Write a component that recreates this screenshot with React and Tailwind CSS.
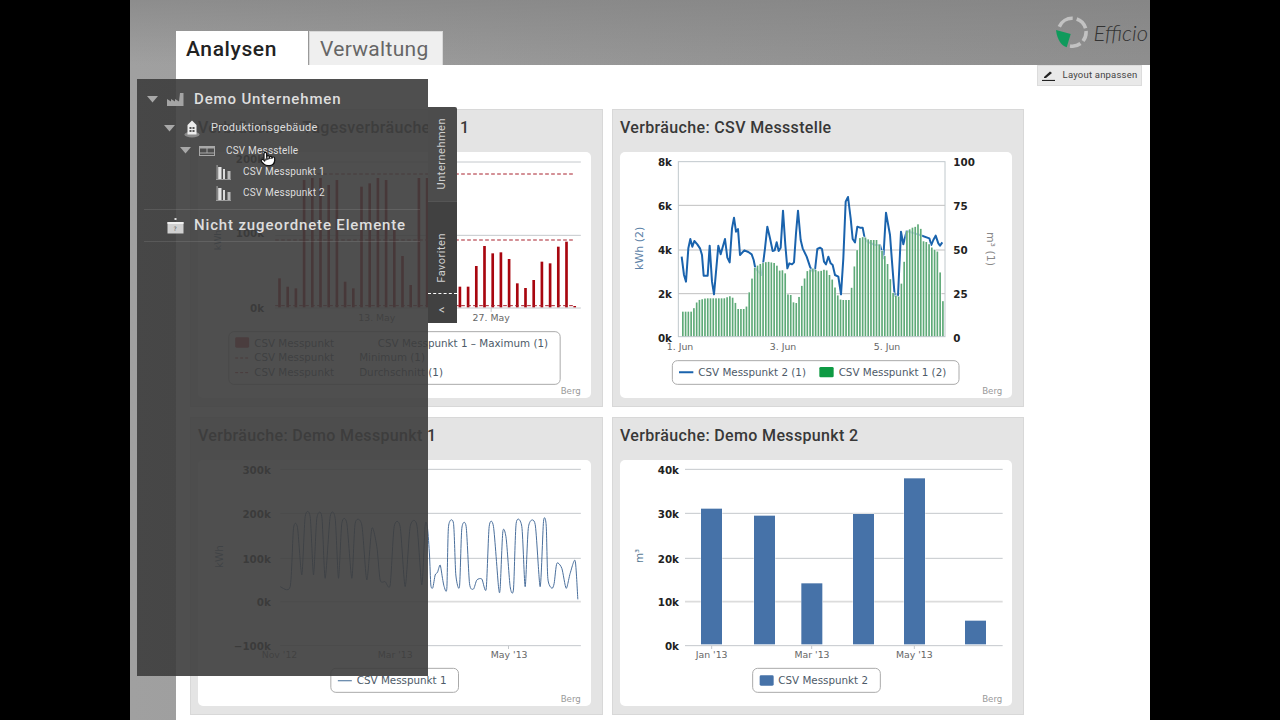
import React from "react";
import { Pointer } from "lucide-react";

const DJ = { fontFamily: "'DejaVu Sans', sans-serif" };

function interp(keys, x) {
  for (let i = 1; i < keys.length; i++) {
    if (x <= keys[i][0]) {
      const [a, b] = keys[i - 1];
      const [c, d] = keys[i];
      return b + ((d - b) * (x - a)) / (c - a);
    }
  }
  return keys[keys.length - 1][1];
}
const pts = (a) => a.map((p) => p.join(",")).join(" ");
function smooth(a) {
  let d = `M${a[0][0]} ${a[0][1]}`;
  for (let i = 0; i < a.length - 1; i++) {
    const p0 = a[Math.max(i - 1, 0)];
    const p1 = a[i];
    const p2 = a[i + 1];
    const p3 = a[Math.min(i + 2, a.length - 1)];
    const k = 0.12;
    d += ` C${p1[0] + (p2[0] - p0[0]) * k} ${p1[1] + (p2[1] - p0[1]) * k} ${p2[0] - (p3[0] - p1[0]) * k} ${p2[1] - (p3[1] - p1[1]) * k} ${p2[0]} ${p2[1]}`;
  }
  return d;
}

function Tick({ x, y, children, size = 31 }) {
  return (
    <text x={x} y={y} textAnchor="end" fontSize={size} fontWeight="700" fill="#222" style={DJ}>
      {children}
    </text>
  );
}
function XLabel({ x, y, children }) {
  return (
    <text x={x} y={y} textAnchor="middle" fontSize="28" fill="#666" style={DJ}>
      {children}
    </text>
  );
}
function Berg({ x, y }) {
  return (
    <text x={x} y={y} textAnchor="end" fontSize="26" fill="#999" style={DJ}>
      Berg
    </text>
  );
}
function LegendText({ x, y, children }) {
  return (
    <text x={x} y={y} fontSize="31" fill="#4d5a68" style={DJ}>
      {children}
    </text>
  );
}

function Chart1() {
  const tops = [175, 200, 205, -120, -126, -126, -105, -120, 185, 205, -100, -110, -126, -120, 30, 108, 195, -126, -126, -110, -60, 200, 200, 200, 138, 78, 100, 97, 117, 190, 204, 180, 125, 130, 80, 65, 258];
  return (
    <svg viewBox="25 -204 1176 738" className="absolute inset-0 w-full h-full">
      {[-174, 46, 264].map((y) => (
        <line key={y} x1="255" x2="1172" y1={y} y2={y} stroke="#c4c8cc" strokeWidth="3" />
      ))}
      {tops.map((t, i) => {
        const x = 264 + i * 24.6;
        return <rect key={i} x={x} y={t} width="8" height={262 - t} fill="#a8060f" />;
      })}
      {[-138, 60, 257].map((y) => (
        <line key={y} x1="255" x2="1150" y1={y} y2={y} stroke="#a8202c" strokeWidth="3" strokeDasharray="11 7" />
      ))}
      <line x1="903" x2="903" y1="264" y2="276" stroke="#c4c8cc" strokeWidth="3" />
      <Tick x={222} y={-170}>200k</Tick>
      <Tick x={222} y={52}>100k</Tick>
      <Tick x={222} y={276}>0k</Tick>
      <text x="92" y="60" transform="rotate(-90 92 60)" textAnchor="middle" fontSize="28" fill="#5a7a95" style={DJ}>kWh</text>
      <XLabel x={560} y={302}>13. May</XLabel>
      <XLabel x={903} y={302}>27. May</XLabel>
      <rect x="116" y="335" width="994" height="158" rx="15" fill="#fff" stroke="#aaa" strokeWidth="3" />
      <rect x="135" y="352" width="42" height="31" rx="4" fill="#c03a42" />
      <LegendText x={192} y={380}>CSV Messpunkt</LegendText>
      <line x1="135" x2="177" y1="414" y2="414" stroke="#b5222b" strokeWidth="3" strokeDasharray="9 6" />
      <LegendText x={192} y={424}>CSV Messpunkt</LegendText>
      <line x1="135" x2="177" y1="458" y2="458" stroke="#b5222b" strokeWidth="3" strokeDasharray="9 6" />
      <LegendText x={192} y={468}>CSV Messpunkt</LegendText>
      <LegendText x={563} y={380}>CSV Messpunkt 1 – Maximum (1)</LegendText>
      <LegendText x={507} y={424}>Minimum (1)</LegendText>
      <LegendText x={507} y={468}>Durchschnitt (1)</LegendText>
      <Berg x={1172} y={522} />
    </svg>
  );
}

const line2 = [[215,455],[222,510],[228,530],[235,430],[241,402],[247,425],[253,408],[262,418],[270,430],[276,450],[281,512],[293,512],[299,422],[306,530],[312,568],[325,422],[332,448],[345,402],[352,458],[359,472],[366,370],[372,338],[378,380],[384,372],[390,450],[403,436],[415,441],[425,448],[431,465],[436,490],[455,510],[465,430],[472,365],[480,400],[488,438],[494,436],[500,412],[506,438],[512,428],[519,317],[526,420],[532,490],[538,475],[546,478],[552,472],[558,385],[564,317],[572,405],[578,430],[590,455],[600,485],[608,500],[615,495],[622,432],[630,428],[636,432],[642,470],[648,478],[655,455],[662,475],[668,480],[675,510],[685,515],[693,568],[700,460],[707,290],[714,276],[722,340],[728,402],[735,412],[742,365],[750,368],[758,368],[764,400],[772,410],[795,420],[810,420],[820,460],[828,323],[840,390],[846,470],[854,572],[864,572],[873,380],[880,418],[890,378],[930,390],[958,400],[964,420],[970,405],[977,392],[985,415],[990,422],[997,412]];
const barKeys = [[216,620],[245,620],[255,595],[265,585],[285,580],[340,580],[362,572],[372,590],[382,612],[405,612],[412,585],[418,542],[432,488],[445,478],[470,470],[495,475],[505,497],[522,495],[530,568],[540,570],[548,592],[560,595],[572,545],[590,497],[605,490],[625,500],[645,492],[665,525],[680,570],[690,585],[718,585],[728,500],[735,458],[745,400],[760,395],[775,405],[800,405],[810,430],[828,465],[838,520],[848,570],[865,575],[877,505],[888,378],[905,368],[915,365],[927,352],[935,408],[950,412],[965,430],[980,440],[987,490],[993,572],[999,603]];

function Chart2() {
  const bars = [];
  for (let i = 0; i < 95; i++) bars.push(216 + i * 8.3);
  return (
    <svg viewBox="30 141 1176 738" className="absolute inset-0 w-full h-full">
      {[301, 435, 566].map((y) => (
        <line key={y} x1="205" x2="1005" y1={y} y2={y} stroke="#c0c0c0" strokeWidth="3" />
      ))}
      <polyline points={pts(line2)} fill="none" stroke="#1a63ad" strokeWidth="6" strokeLinejoin="round" />
      {bars.map((x) => {
        const t = interp(barKeys, x);
        return (
          <g key={x}>
            <rect x={x - 1.5} y={t - 2} width="8.3" height={695 - t + 2} fill="#fff" opacity="0.85" />
            <rect x={x} y={t} width="5" height={695 - t} fill="#5eaa78" />
          </g>
        );
      })}
      <rect x="205" y="170" width="800" height="525" fill="none" stroke="#c0c8cc" strokeWidth="3" />
      <Tick x={186} y={183}>8k</Tick>
      <Tick x={186} y={314}>6k</Tick>
      <Tick x={186} y={447}>4k</Tick>
      <Tick x={186} y={579}>2k</Tick>
      <Tick x={186} y={710}>0k</Tick>
      {[["100", 183], ["75", 314], ["50", 447], ["25", 579], ["0", 710]].map(([t, y]) => (
        <text key={t} x="1030" y={y} fontSize="31" fontWeight="700" fill="#222" style={DJ}>{t}</text>
      ))}
      <text x="100" y="430" transform="rotate(-90 100 430)" textAnchor="middle" fontSize="33" fill="#5d83a8" style={DJ}>kWh (2)</text>
      <text x="1130" y="432" transform="rotate(90 1130 432)" textAnchor="middle" fontSize="33" fill="#888" style={DJ}>m³ (1)</text>
      <XLabel x={210} y={735}>1. Jun</XLabel>
      <XLabel x={519} y={735}>3. Jun</XLabel>
      <XLabel x={831} y={735}>5. Jun</XLabel>
      <rect x="187" y="767" width="860" height="71" rx="15" fill="#fff" stroke="#aaa" strokeWidth="3" />
      <line x1="207" x2="250" y1="802" y2="802" stroke="#1a63ad" strokeWidth="6" />
      <LegendText x={265} y={814}>CSV Messpunkt 2 (1)</LegendText>
      <rect x="628" y="786" width="43" height="31" rx="4" fill="#0e9a43" />
      <LegendText x={686} y={814}>CSV Messpunkt 1 (2)</LegendText>
      <Berg x={1177} y={866} />
    </svg>
  );
}

const line3 = [[270,515],[300,515],[310,340],[322,338],[335,480],[345,305],[360,305],[370,480],[380,310],[395,305],[405,490],[420,305],[435,310],[445,490],[455,325],[470,325],[485,490],[495,325],[515,330],[530,495],[545,340],[560,395],[570,495],[585,500],[600,510],[612,335],[630,335],[645,515],[660,335],[680,330],[695,510],[705,330],[712,340],[718,420],[722,510],[728,518],[735,480],[742,472],[750,450],[757,490],[762,515],[770,520],[775,335],[790,325],[797,480],[808,515],[815,340],[828,335],[838,505],[850,522],[860,495],[875,492],[888,522],[897,335],[910,335],[925,515],[930,520],[938,350],[948,370],[960,515],[970,522],[978,325],[995,335],[1005,515],[1015,335],[1035,328],[1050,515],[1060,320],[1068,330],[1073,490],[1085,520],[1092,505],[1100,445],[1115,460],[1128,520],[1140,475],[1155,437],[1163,553]];

function Chart3() {
  return (
    <svg viewBox="25 135 1176 738" className="absolute inset-0 w-full h-full">
      {[163, 295, 430, 692].map((y) => (
        <line key={y} x1="270" x2="1172" y1={y} y2={y} stroke="#c4c8cc" strokeWidth="3" />
      ))}
      <line x1="270" x2="1172" y1="560" y2="560" stroke="#dcdcdc" strokeWidth="5" />
      <path d={smooth(line3)} fill="none" stroke="#4a6f9c" strokeWidth="3" strokeLinejoin="round" />
      <line x1="955" x2="955" y1="692" y2="702" stroke="#c4c8cc" strokeWidth="3" />
      <Tick x={242} y={176}>300k</Tick>
      <Tick x={242} y={308}>200k</Tick>
      <Tick x={242} y={443}>100k</Tick>
      <Tick x={242} y={573}>0k</Tick>
      <Tick x={242} y={705}>−100k</Tick>
      <text x="98" y="425" transform="rotate(-90 98 425)" textAnchor="middle" fontSize="31" fill="#5a7a95" style={DJ}>kWh</text>
      <XLabel x={268} y={728}>Nov '12</XLabel>
      <XLabel x={615} y={728}>Mar '13</XLabel>
      <XLabel x={957} y={728}>May '13</XLabel>
      <rect x="422" y="760" width="383" height="72" rx="15" fill="#fff" stroke="#aaa" strokeWidth="3" />
      <line x1="443" x2="485" y1="797" y2="797" stroke="#6f8fb0" strokeWidth="4" />
      <LegendText x={500} y={808}>CSV Messpunkt 1</LegendText>
      <Berg x={1172} y={860} />
    </svg>
  );
}

function Chart4() {
  const bars = [[273,281],[432,302],[574,505],[729,297],[882,190],[1065,617]];
  return (
    <svg viewBox="30 135 1176 738" className="absolute inset-0 w-full h-full">
      {[163, 295, 430, 692].map((y) => (
        <line key={y} x1="225" x2="1178" y1={y} y2={y} stroke="#c4c8cc" strokeWidth="3" />
      ))}
      <line x1="225" x2="1178" y1="560" y2="560" stroke="#dcdcdc" strokeWidth="5" />
      {bars.map(([x, t]) => (
        <rect key={x} x={x} y={t} width="63" height={688 - t} fill="#4672a8" stroke="#fff" strokeWidth="2" paintOrder="stroke" />
      ))}
      {[305, 605, 913].map((x) => (
        <line key={x} x1={x} x2={x} y1="692" y2="702" stroke="#c4c8cc" strokeWidth="3" />
      ))}
      <Tick x={207} y={176}>40k</Tick>
      <Tick x={207} y={308}>30k</Tick>
      <Tick x={207} y={443}>20k</Tick>
      <Tick x={207} y={573}>10k</Tick>
      <Tick x={207} y={705}>0k</Tick>
      <text x="100" y="423" transform="rotate(-90 100 423)" textAnchor="middle" fontSize="31" fill="#5a7a95" style={DJ}>m³</text>
      <XLabel x={305} y={730}>Jan '13</XLabel>
      <XLabel x={606} y={730}>Mar '13</XLabel>
      <XLabel x={913} y={730}>May '13</XLabel>
      <rect x="428" y="760" width="383" height="72" rx="15" fill="#fff" stroke="#aaa" strokeWidth="3" />
      <rect x="449" y="781" width="42" height="31" rx="4" fill="#4672a8" />
      <LegendText x={505} y={808}>CSV Messpunkt 2</LegendText>
      <Berg x={1177} y={860} />
    </svg>
  );
}

function Card({ title, children }) {
  return (
    <div className="h-[298px] bg-[#e4e4e4] border border-[#d8d8d8] pl-[7px] pr-[11px] pb-[8px] flex flex-col">
      <div className="h-[42px] shrink-0 pb-[6px] flex items-center text-[16px] font-medium tracking-[0.35px] text-[#383838] whitespace-nowrap">
        {title}
      </div>
      <div className="relative flex-1 bg-white rounded-[5px] overflow-hidden">{children}</div>
    </div>
  );
}

const Arrow = () => (
  <svg width="11" height="7" viewBox="0 0 11 7" className="shrink-0">
    <path d="M0 0H11L5.5 6.5Z" fill="#a8a8a8" />
  </svg>
);
const Factory = () => (
  <svg width="17" height="13" viewBox="0 0 17 13">
    <path d="M0 13V6L4 8.5V6L8 8.5V6L12 8.5L13 0H16.5V13Z" fill="#a4a4a4" />
  </svg>
);
const House = () => (
  <svg width="16" height="18" viewBox="0 0 16 18">
    <ellipse cx="8" cy="14.5" rx="7.5" ry="3" fill="#8a8a8a" />
    <path d="M8 0.5L12.5 5V14.5H3.5V5Z" fill="#ededed" />
    <rect x="5.5" y="7" width="2" height="2" fill="#555" />
    <rect x="8.5" y="7" width="2" height="2" fill="#555" />
    <rect x="5.5" y="10" width="2" height="2" fill="#555" />
    <rect x="8.5" y="10" width="2" height="2" fill="#555" />
  </svg>
);
const Machine = () => (
  <svg width="16" height="10" viewBox="0 0 16 10">
    <rect x="0.5" y="0.5" width="15" height="9" fill="none" stroke="#a8a8a8" />
    <rect x="1" y="1" width="14" height="1.5" fill="#a8a8a8" />
    <rect x="7.5" y="1" width="1" height="6" fill="#a8a8a8" />
    <rect x="1" y="6.5" width="14" height="1" fill="#a8a8a8" />
  </svg>
);
const Bars = () => (
  <svg width="15" height="16" viewBox="0 0 15 16">
    <rect x="0.5" y="1" width="1.2" height="14" fill="#9c9c9c" />
    <rect x="2.2" y="3" width="3.3" height="12" fill="#e4e4e4" />
    <rect x="7" y="5" width="2" height="10" fill="#dcdcdc" />
    <rect x="11.5" y="7" width="3" height="8" fill="#bcbcbc" />
    <rect x="0" y="15" width="15" height="1" fill="#9c9c9c" />
  </svg>
);
const Box = () => (
  <svg width="17" height="16" viewBox="0 0 17 16">
    <rect x="7.5" y="0" width="2" height="2" fill="#ddd" />
    <rect x="0.5" y="4" width="16" height="11.5" fill="#d0d0d0" />
    <rect x="0.5" y="4" width="16" height="2" fill="#f0f0f0" />
    <text x="8.5" y="13" textAnchor="middle" fontSize="6" fill="#555" style={DJ}>?</text>
  </svg>
);

function Row({ className, children }) {
  return <div className={"flex items-center " + className}>{children}</div>;
}

function Sidebar() {
  return (
    <div className="absolute left-[7px] top-[79px] w-[291px] h-[597px] bg-[rgba(62,62,62,0.91)]">
      <Row className="h-[38px] pt-[3px] pl-[10px] text-[15px] font-medium tracking-[0.85px] text-[#dedede]">
        <Arrow />
        <span className="ml-[9px] w-[18px] flex"><Factory /></span>
        <span className="ml-[9px]">Demo Unternehmen</span>
      </Row>
      <Row className="h-[23px] pl-[27px] text-[11px] tracking-[0.3px] text-[#dedede]">
        <Arrow />
        <span className="ml-[9px] w-[16px] flex"><House /></span>
        <span className="ml-[11px]">Produktionsgebäude</span>
      </Row>
      <Row className="h-[21px] pl-[43px] text-[10px] tracking-[0.2px] text-[#dedede]">
        <Arrow />
        <span className="ml-[8px] w-[16px] flex"><Machine /></span>
        <span className="ml-[11px]">CSV Messstelle</span>
      </Row>
      <Row className="h-[21px] pl-[79px] text-[10px] tracking-[0.2px] text-[#dedede]">
        <Bars />
        <span className="ml-[12px]">CSV Messpunkt 1</span>
      </Row>
      <Row className="h-[21px] pl-[79px] text-[10px] tracking-[0.2px] text-[#dedede]">
        <Bars />
        <span className="ml-[12px]">CSV Messpunkt 2</span>
      </Row>
      <div className="mt-[6px] mx-[7px] h-[33px] border-y border-white/10 flex items-center pl-[23px] text-[15px] font-medium tracking-[0.85px] text-[#dedede] w-[276px] whitespace-nowrap">
        <Box />
        <span className="ml-[10px]">Nicht zugeordnete Elemente</span>
      </div>
      <div className="absolute left-[291px] top-[28px] w-[29px] flex flex-col text-[#cfcfcf] text-[11px] tracking-[0.5px]">
        <div className="h-[94px] bg-[#4c4c4c] flex items-center justify-center rounded-tr-[2px]">
          <span className="[writing-mode:vertical-rl] rotate-180">Unternehmen</span>
        </div>
        <div className="h-[92px] pb-[10px] bg-[#414141] flex items-end justify-center border-t border-[#555]">
          <span className="[writing-mode:vertical-rl] rotate-180">Favoriten</span>
        </div>
        <div className="h-[30px] pt-[2px] pr-[1px] bg-[#414141] border-t border-dashed border-white flex items-center justify-center text-[12px]">
          &lt;
        </div>
      </div>
      <Pointer className="absolute left-[123px] top-[72px]" size={16} fill="#fff" stroke="#111" strokeWidth={1.8} />
    </div>
  );
}

export default function App() {
  return (
    <div className="w-[1280px] h-[720px] bg-black flex justify-center overflow-hidden" style={{ fontFamily: "Roboto, 'Liberation Sans', sans-serif" }}>
      <div className="relative w-[1020px] h-[720px] bg-gradient-to-r from-[#a0a0a0] via-[#969696] to-[#8f8f8f] overflow-hidden">
        <header className="h-[65px] pt-[31px] pl-[46px] flex relative bg-gradient-to-b from-[#808080]/60 to-transparent">
          <div className="w-[132px] h-[34px] pl-[10px] pt-[3px] bg-white flex items-center text-[21px] font-medium tracking-[0.6px] text-[#222]">
            Analysen
          </div>
          <div className="ml-px w-[134px] h-[34px] pt-[3px] pl-[10px] bg-[#efefef] border-t border-x border-[#d8d8d8] flex items-center text-[21px] tracking-[0.3px] text-[#666]">
            Verwaltung
          </div>
          <div className="ml-auto flex items-center gap-[6px] h-[32px] -mt-[15px] mr-[2px]">
            <svg width="32" height="32" viewBox="0 0 32 32">
              <g fill="none" strokeWidth="3.6" stroke="#c2c2c2">
                <path d="M3.3 10.7A14 14 0 0 1 16.7 2.3" />
                <path d="M20.7 3A14 14 0 0 1 29.6 12.3" />
                <path d="M30 15A14 14 0 0 1 27 25" />
                <path d="M24.5 27.5A14 14 0 0 1 14 30" />
              </g>
              <path d="M0 14L14.7 18L10.7 31.3C6 30 1 24 0 14Z" fill="#0f9a5c" />
            </svg>
            <span className="text-[22px] italic font-light text-[#333] whitespace-nowrap" style={{ fontFamily: "Lato, sans-serif" }}>Efficio</span>
          </div>
        </header>
        <div className="flex">
          <div className="w-[46px] shrink-0" />
          <main className="flex-1 h-[655px] bg-white pl-[14px]">
            <div className="flex justify-end pr-[8px] h-[21px]">
              <div className="w-[105px] h-[21px] bg-[#e9e9e9] border border-[#dcdcdc] flex items-center justify-center gap-[7px] text-[9.5px] tracking-[0.2px] text-[#444]">
                <svg width="14" height="11" viewBox="0 0 14 11">
                  <path d="M2 7L8 1.5L10 3L4 8H2Z" fill="#222" />
                  <path d="M0 10.5H13" stroke="#222" strokeWidth="1.2" />
                </svg>
                Layout anpassen
              </div>
            </div>
            <div className="mt-[23px] grid grid-cols-[413px_412px] gap-x-[9px] gap-y-[10px]">
              <Card title="Verbräuche – Tagesverbräuche CS 1"><Chart1 /></Card>
              <Card title="Verbräuche: CSV Messstelle"><Chart2 /></Card>
              <Card title="Verbräuche: Demo Messpunkt 1"><Chart3 /></Card>
              <Card title="Verbräuche: Demo Messpunkt 2"><Chart4 /></Card>
            </div>
          </main>
        </div>
        <Sidebar />
      </div>
    </div>
  );
}
